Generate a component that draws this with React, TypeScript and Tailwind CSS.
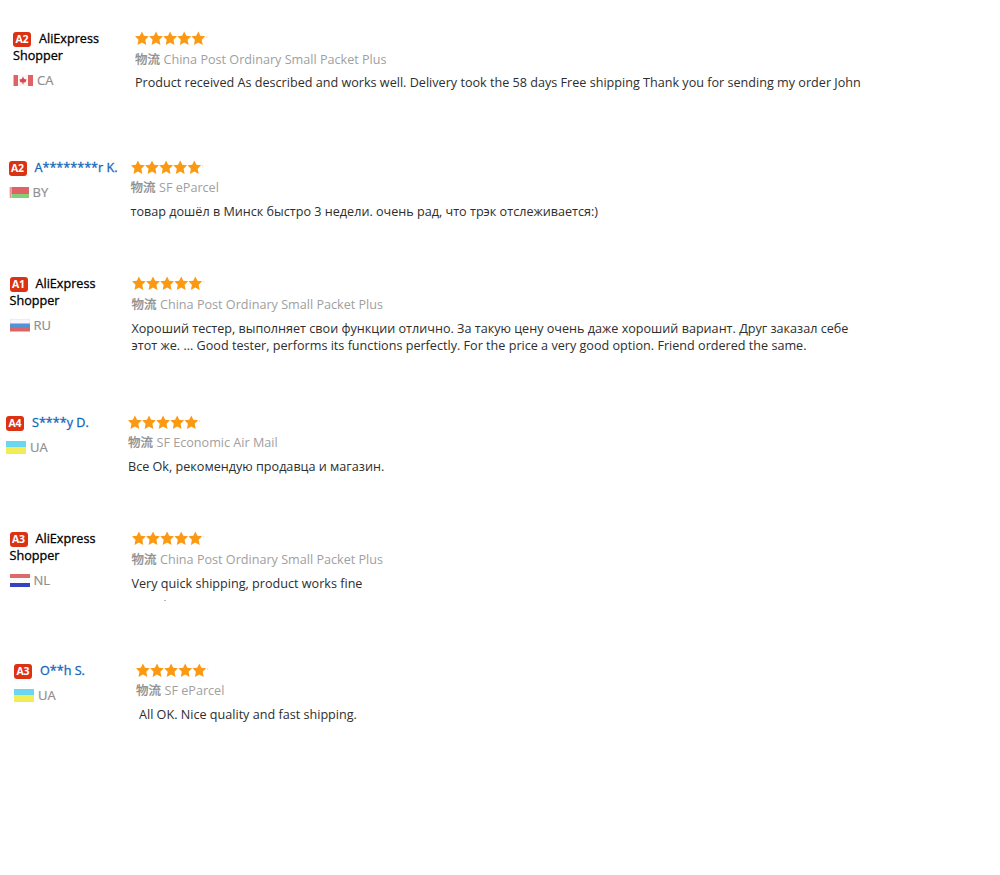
type Country = 'CA' | 'BY' | 'RU' | 'UA' | 'NL';

type Review = {
  id: number;
  level: string;
  name: string;
  member?: boolean;
  country: Country;
  shipping: string;
  lines: string[];
  rowClass: string;
  shippingClass: string;
  bodyClass: string;
};

const reviews: Review[] = [
  {
    id: 1,
    level: 'A2',
    name: 'AliExpress Shopper',
    country: 'CA',
    shipping: 'China Post Ordinary Small Packet Plus',
    lines: [
      'Product received As described and works well. Delivery took the 58 days Free shipping Thank you for sending my order John',
    ],
    rowClass: 'h-[129px] pl-[13px]',
    shippingClass: 'mt-[4px]',
    bodyClass: 'mt-[6px]',
  },
  {
    id: 2,
    level: 'A2',
    name: 'A********r K.',
    member: true,
    country: 'BY',
    shipping: 'SF eParcel',
    lines: ['товар дошёл в Минск быстро 3 недели. очень рад, что трэк отслеживается:)'],
    rowClass: 'h-[116px] pl-[8.5px]',
    shippingClass: 'mt-[3px]',
    bodyClass: 'mt-[7px]',
  },
  {
    id: 3,
    level: 'A1',
    name: 'AliExpress Shopper',
    country: 'RU',
    shipping: 'China Post Ordinary Small Packet Plus',
    lines: [
      'Хороший тестер, выполняет свои функции отлично. За такую цену очень даже хороший вариант. Друг заказал себе',
      'этот же. ... Good tester, performs its functions perfectly. For the price a very good option. Friend ordered the same.',
    ],
    rowClass: 'h-[139px] pl-[9.5px]',
    shippingClass: 'mt-[4px]',
    bodyClass: 'mt-[7px]',
  },
  {
    id: 4,
    level: 'A4',
    name: 'S****y D.',
    member: true,
    country: 'UA',
    shipping: 'SF Economic Air Mail',
    lines: ['Все Ok, рекомендую продавца и магазин.'],
    rowClass: 'h-[116px] pl-[6px]',
    shippingClass: 'mt-[3px]',
    bodyClass: 'mt-[7px]',
  },
  {
    id: 5,
    level: 'A3',
    name: 'AliExpress Shopper',
    country: 'NL',
    shipping: 'China Post Ordinary Small Packet Plus',
    lines: ['Very quick shipping, product works fine'],
    rowClass: 'h-[132px] pl-[9.5px]',
    shippingClass: 'mt-[4px]',
    bodyClass: 'mt-[7px]',
  },
  {
    id: 6,
    level: 'A3',
    name: 'O**h S.',
    member: true,
    country: 'UA',
    shipping: 'SF eParcel',
    lines: ['All OK. Nice quality and fast shipping.'],
    rowClass: 'h-[116px] pl-[14px]',
    shippingClass: 'mt-[3px]',
    bodyClass: 'mt-[7px] pl-[3px]',
  },
];

export default function App() {
  return (
    <main className="h-[875px] w-[1000px] overflow-hidden bg-white pt-[30px] font-['Open_Sans','Noto_Sans_CJK_SC',sans-serif] text-[12.62px] leading-[17px]">
      {reviews.map((review) => (
        <ReviewRow key={review.id} review={review} />
      ))}
    </main>
  );
}

function ReviewRow({ review }: { review: Review }) {
  return (
    <article className={`flex ${review.rowClass}`}>
      <div className="w-[122px] shrink-0">
        <div className="w-[112px]">
          <LevelBadge level={review.level} />
          <span
            className={`[-webkit-text-stroke:0.3px_currentColor] ${review.member ? 'whitespace-nowrap text-[#1467b8]' : 'text-black'}`}
          >
            {review.name}
          </span>
        </div>
        <div className="mt-[8px] flex h-[17px] items-center gap-[4px] text-[13px] text-[#8f8f8f]">
          <Flag country={review.country} />
          <span className="[-webkit-text-stroke:0.2px_currentColor]">{review.country}</span>
        </div>
      </div>
      <div>
        <Stars />
        <p className={`flex h-[17px] items-center gap-[3.5px] whitespace-nowrap text-[#a0a0a0] ${review.shippingClass}`}>
          <span className="text-[12.5px] text-[#8c8c8c] [-webkit-text-stroke:0.3px_currentColor]">物流</span>
          <span>{review.shipping}</span>
        </p>
        <div className={`whitespace-nowrap text-[#2e2e2e] ${review.bodyClass}`}>
          {review.lines.map((line) => (
            <p key={line}>{line}</p>
          ))}
        </div>
        {review.country === 'NL' && <div className="mt-[8px] ml-[32px] h-px w-[2px] bg-[#b5b5b5]" />}
      </div>
    </article>
  );
}

function LevelBadge({ level }: { level: string }) {
  return (
    <span className="mt-[2px] mr-[8px] inline-flex h-[15px] w-[18px] items-center justify-center rounded-[3px] bg-[#dc3214] align-top text-[10.5px] leading-none font-bold text-white">
      {level}
    </span>
  );
}

function Stars() {
  return (
    <svg width="74" height="17" viewBox="0 0 74 17" className="block" fill="#fb9a12">
      {[0, 1, 2, 3, 4].map((i) => (
        <path
          key={i}
          transform={`translate(${i * 14.1} 0)`}
          d="M6.9 1.4 9 5.8 13.8 6.3 10.3 9.7 11.3 15 6.9 12.5 2.5 15 3.5 9.7 0 6.3 4.8 5.8Z"
        />
      ))}
      <rect x="71.2" y="6.5" width="1" height="1" opacity="0.6" />
    </svg>
  );
}

function Flag({ country }: { country: Country }) {
  return (
    <svg width="20" height="13" viewBox="0 0 20 13" className="shrink-0">
      {country === 'CA' && (
        <>
          <rect y="1" width="20" height="11" fill="#fbf6f6" />
          <rect y="1" width="5" height="11" fill="#df6265" />
          <rect y="1" width="1" height="11" fill="#eeb0b0" />
          <rect x="15" y="1" width="5" height="11" fill="#df6265" />
          <path d="M10 2.5 11.2 5 13.6 5.5 12.5 8.2 10.5 8.5V10.3H9.5V8.5L7.5 8.2 6.4 5.5 8.8 5Z" fill="#d9474d" />
        </>
      )}
      {country === 'BY' && (
        <>
          <rect y="1" width="20" height="7" fill="#de6266" />
          <rect y="8" width="20" height="4" fill="#83cf78" />
          <rect y="1" width="2.5" height="11" fill="#f3dcdc" />
          <rect x="1" y="1" width="0.8" height="11" fill="#de8a8c" />
        </>
      )}
      {country === 'RU' && (
        <>
          <rect y="0" width="20" height="4.5" fill="#dfe5ee" />
          <rect x="0.5" y="0.5" width="19" height="3.5" fill="#f5f7fa" />
          <rect y="4.5" width="20" height="4.5" fill="#5591d6" />
          <rect y="9" width="20" height="3.5" fill="#d86567" />
        </>
      )}
      {country === 'UA' && (
        <>
          <rect width="20" height="6.5" fill="#6bd6ef" />
          <rect y="6.5" width="20" height="6.5" fill="#f2ec55" />
        </>
      )}
      {country === 'NL' && (
        <>
          <rect width="20" height="4" fill="#dc6a6b" />
          <rect y="4" width="20" height="5" fill="#fafafa" />
          <rect y="9" width="20" height="4" fill="#3442c3" />
        </>
      )}
    </svg>
  );
}
